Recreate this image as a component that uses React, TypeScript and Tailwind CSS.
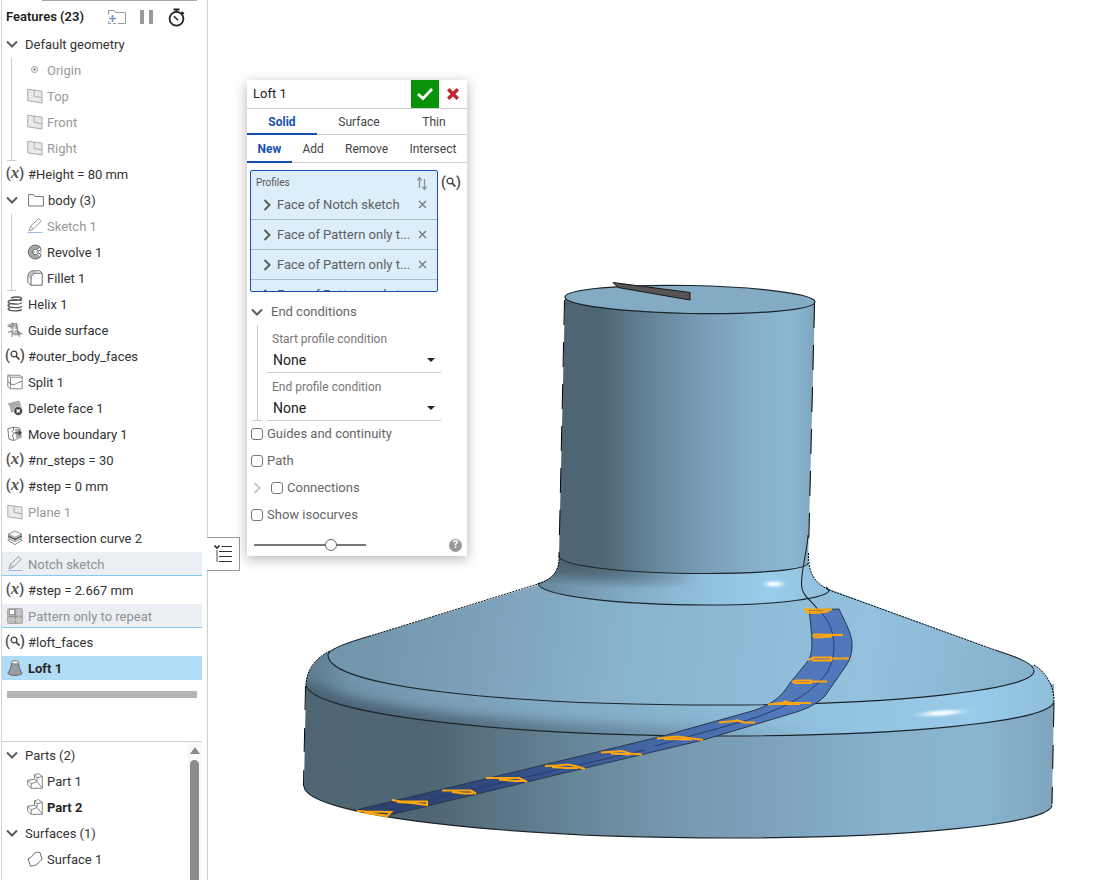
import { useState, type ReactNode } from "react";

type IconName =
  | "origin" | "plane" | "variable" | "sketch" | "revolve" | "fillet" | "helix" | "guide"
  | "query" | "split" | "deleteFace" | "moveBoundary" | "intersection" | "pattern" | "loft"
  | "part" | "surface";

type Feature = {
  label: string;
  icon: IconName;
  state?: "muted" | "related" | "selected" | "bold";
};

const GEOMETRY: Feature[] = [
  { label: "Origin", icon: "origin", state: "muted" },
  { label: "Top", icon: "plane", state: "muted" },
  { label: "Front", icon: "plane", state: "muted" },
  { label: "Right", icon: "plane", state: "muted" },
];

const BODY: Feature[] = [
  { label: "Sketch 1", icon: "sketch", state: "muted" },
  { label: "Revolve 1", icon: "revolve" },
  { label: "Fillet 1", icon: "fillet" },
];

const FEATURES: Feature[] = [
  { label: "Helix 1", icon: "helix" },
  { label: "Guide surface", icon: "guide" },
  { label: "#outer_body_faces", icon: "query" },
  { label: "Split 1", icon: "split" },
  { label: "Delete face 1", icon: "deleteFace" },
  { label: "Move boundary 1", icon: "moveBoundary" },
  { label: "#nr_steps = 30", icon: "variable" },
  { label: "#step = 0 mm", icon: "variable" },
  { label: "Plane 1", icon: "plane", state: "muted" },
  { label: "Intersection curve 2", icon: "intersection" },
  { label: "Notch sketch", icon: "sketch", state: "related" },
  { label: "#step = 2.667 mm", icon: "variable" },
  { label: "Pattern only to repeat", icon: "pattern", state: "related" },
  { label: "#loft_faces", icon: "query" },
  { label: "Loft 1", icon: "loft", state: "selected" },
];

const PROFILES = [
  "Face of Notch sketch",
  "Face of Pattern only t...",
  "Face of Pattern only t...",
  "Face of Pattern only t...",
];

function Svg({ children, className = "size-4" }: { children: ReactNode; className?: string }) {
  return (
    <svg viewBox="0 0 16 16" className={`shrink-0 ${className}`} fill="none" stroke="#6b6b6b" strokeWidth="1" aria-hidden="true">
      {children}
    </svg>
  );
}

function Chevron({ open = true, pale = false }: { open?: boolean; pale?: boolean }) {
  return (
    <svg viewBox="0 0 12 12" className="size-3 shrink-0" fill="none" stroke={pale ? "#c9c9c9" : "#5c5c5c"} strokeWidth="2" aria-hidden="true">
      {open ? <path d="M1 3.5 6 8.5 11 3.5" /> : <path d="M3.5 1 8.5 6 3.5 11" />}
    </svg>
  );
}

function Query({ className = "" }: { className?: string }) {
  return (
    <span className={`flex shrink-0 items-center justify-center text-[14px] leading-4 font-medium text-[#444] ${className}`} aria-hidden="true">
      <span>(</span>
      <svg viewBox="0 0 10 12" className="h-3 w-2.5" fill="none" stroke="#444">
        <circle cx="4" cy="5" r="2.9" strokeWidth="1.3" />
        <path d="M6.2 7.2 9.4 10.6" strokeWidth="1.7" />
      </svg>
      <span>)</span>
    </span>
  );
}

function FeatureIcon({ name }: { name: IconName }) {
  switch (name) {
    case "origin":
      return (
        <Svg>
          <circle cx="7.5" cy="7.5" r="3" stroke="#999" />
          <circle cx="7.5" cy="7.5" r="1.2" fill="#888" stroke="none" />
        </Svg>
      );
    case "plane":
      return (
        <Svg>
          <path d="M.8 1.2 15 3.2V15L.8 12.8Z" fill="#e9e9e9" stroke="#aaa" />
          <path d="M7.2 2.2V8.5L15 9.7" stroke="#aaa" />
        </Svg>
      );
    case "variable":
      return (
        <span className="-mx-1 flex w-6 shrink-0 items-center justify-center pb-0.5 text-[14px] leading-4 font-bold text-[#555]" aria-hidden="true">
          (<i className="font-['Liberation_Serif',serif] text-[17px] leading-4 font-bold">x</i>)
        </span>
      );
    case "sketch":
      return (
        <Svg>
          <path d="M2 12.8 3.6 8.2 11.4.8 14.2 3.2 6.4 11Z" stroke="#999" />
          <path d="M3.6 8.2 6.4 11" stroke="#999" />
          <path d="M.5 14.5H15.5" stroke="#9dbbe4" />
        </Svg>
      );
    case "revolve":
      return (
        <Svg>
          <path d="M13.5 3.4A7 7 0 1 0 13.2 13L9.8 10.2A2.8 2.8 0 1 1 10 5.7Z" fill="#a7a7a7" />
          <path d="M13.5 3.4 14 6 10.8 7.2 10 5.7M13.2 13 14 10.4 11 9.5 9.8 10.2" fill="#fff" />
          <path d="M5 8H14.8" strokeWidth=".8" strokeDasharray="3 1" />
        </Svg>
      );
    case "fillet":
      return (
        <Svg>
          <path d="M.8 7C.8 3.2 3 .8 6.800.8L9.5 3.2C6 3.2 4 5.2 4 9Z" fill="#c4c4c4" stroke="none" />
          <path d="M4 15.2H15.2V3.2H9.5C6 3.2 4 5.2 4 9ZM4 15.2.8 12.3V7C.8 3.2 3 .8 6.8.8H12.8L15.2 3.2" />
        </Svg>
      );
    case "helix":
      return (
        <Svg>
          <path d="M4 1.8C8 .4 14 .8 14.5 2.4S9 4.8 5 4M14.4 5C14 3.8 8 3.4 4 4.2-.3 5.2.7 7.4 5 7.800S14.5 8 14.7 6.5M3 8.2C-.2 9 .8 11 5 11.4S14.5 11.6 14.7 10.2M3 11.8C0 12.8 1 14.2 5 14.6S13 15 14.7 13.6" stroke="#555" strokeWidth="1.4" />
        </Svg>
      );
    case "guide":
      return (
        <Svg>
          <path d="M1.5 2.8 6 1.4C9 1 10 3.2 9.8 5.4L10.5 9 13.5 12.4 8 13 4.6 11 5.3 7Z" fill="#b5b5b5" stroke="#999" />
          <path d="M.5 4 5.5 5M10 9 15.5 12M5 .8 6.200 4M5.500 11 4.6 15M9.5 1 10.500 8 12.5 14.8M1 10.5 5 8.8" stroke="#777" />
          <path d="M7.4 5V10M5.500 7.6H9.8" stroke="#fff" />
        </Svg>
      );
    case "query":
      return <Query className="-mx-1 w-6 pb-0.5" />;
    case "split":
      return (
        <Svg>
          <path d="M.8 1.2 3.5 3.2H15.2V14.8H3.5L.8 12.5ZM3.5 3.2V14.8M.8 1.2H12.8L15.2 3.2" stroke="#888" />
          <path d="M.8 7.5 3.5 9.8C6 11.2 7.8 10.6 9.5 9.4S12.5 8.5 15 7.2" stroke="#777" />
        </Svg>
      );
    case "deleteFace":
      return (
        <Svg>
          <path d="M.5 3.2C4.5 3 8 1 12.5.8L14.8 8 7 11.5 3.5 13C4.2 9 2.8 6 .5 3.2Z" fill="#aaa" stroke="none" />
          <circle cx="11.2" cy="11" r="4.4" fill="#444" stroke="#fff" strokeWidth=".6" />
          <path d="M9.6 9.4 12.8 12.6M12.8 9.4 9.6 12.6" stroke="#fff" strokeWidth="1.4" />
        </Svg>
      );
    case "moveBoundary":
      return (
        <Svg>
          <path d="M8 3 14 2.4 15 11.5 9.5 13.5Z" fill="#aaa" stroke="none" />
          <path d="M.8 2.8 6.5 1.2V4L5 5.5 6.8 7.5 5.2 10 6.5 11.5V14.5L2 13.2Z" stroke="#777" />
          <path d="M6.5 1.2 13 2M6.5 14.5 9.5 13.5" stroke="#888" />
          <path d="M7.5 6.8H14M11.6 4.6 14 6.8 11.6 9" stroke="#444" strokeWidth="1.2" />
        </Svg>
      );
    case "intersection":
      return (
        <Svg>
          <path d="M8 .8 14.5 4 8 7.2 1.5 4ZM1.5 4V8.2L8 11.8 14.5 8.2V4M8 7.2V11.8" fill="#eee" stroke="#999" />
          <path d="M1.5 6 8 9.5 14.5 6" stroke="#555" strokeWidth="1.5" />
          <path d="M3 9.2.8 10.2 8 14.6 15.2 10.2 13 9.2" stroke="#888" />
        </Svg>
      );
    case "pattern":
      return (
        <Svg>
          <rect x=".5" y=".5" width="15" height="15" rx="1" fill="#bdbdbd" stroke="#aaa" />
          <path d="M8.3 1V15M1 8.3H15" stroke="#8c8c8c" />
          <path d="M11.800 1V15M1 11.8H15" stroke="#cecece" />
          <rect x="2.5" y="1.5" width="5" height="5" fill="#fff" stroke="#999" />
        </Svg>
      );
    case "loft":
      return (
        <Svg>
          <path d="M4.5 2.5C4.2 8 2.5 11 .8 13.2 3 16.2 13 16.2 15.2 13.2 13.5 11 11.8 8 11.5 2.5Z" fill="#999da3" stroke="#666" />
          <ellipse cx="8" cy="2.4" rx="3.5" ry="1.7" fill="#f4f4f4" stroke="#777" />
        </Svg>
      );
    case "part":
      return (
        <Svg>
          <path d="M7.500 1.800 11.500.6 15.300 3.400V15.300H4.200L.7 12.200V7.200L7.500 6.300ZM7.500 6.300 10 8.500V4.800L15.300 3.400M10 4.800 7.500 1.800M4.200 15.300V10.800L.7 7.200M4.200 10.800 10 8.500 15.300 15" stroke="#777" strokeWidth=".9" />
        </Svg>
      );
    case "surface":
      return (
        <Svg>
          <path d="M1 7.800C4 7 5.500 5 6 3.400 8 1 11.500.8 13 1.600L15 8.600C12.500 9.600 11.800 11.500 10.500 13 8.500 15.200 6 14 3.500 15.200Z" />
        </Svg>
      );
  }
}

function FeatureRow({ feature, nested = false }: { feature: Feature; nested?: boolean }) {
  const { label, icon, state } = feature;
  let tone = "text-[#333]";
  if (state === "muted") tone = "text-[#999]";
  if (state === "related") tone = "border-b border-[#85c9f2] bg-[#ebeef2] text-[#8d9195]";
  if (state === "selected") tone = "bg-[#b1dcf5] font-bold text-[#262626]";
  if (state === "bold") tone = "font-bold text-[#262626]";
  return (
    <li className={`flex h-6 items-center gap-1 whitespace-nowrap ${nested ? "pl-[15px]" : "pl-[5px]"} ${tone}`}>
      <FeatureIcon name={icon} />
      <span className={`pt-0.5 ${nested ? "" : "pl-px"}`}>{label}</span>
    </li>
  );
}

function Group({ label, folder = false, guide = true, items }: { label: string; folder?: boolean; guide?: boolean; items: Feature[] }) {
  const [open, setOpen] = useState(true);
  return (
    <li className="flex flex-col gap-0.5">
      <button
        type="button"
        aria-expanded={open}
        onClick={() => setOpen(!open)}
        className="flex h-6 items-center gap-[7px] pl-1 text-left text-[#333]"
      >
        <Chevron open={open} />
        {folder && (
          <Svg className="-mr-[3px] ml-[3px] size-4">
            <path d="M.6 2.500H5.500L7 4.500H15.400V14H.6Z" stroke="#777" />
          </Svg>
        )}
        <span className="pt-0.5">{label}</span>
      </button>
      {open && (
        <ul className={`relative ml-[9px] flex flex-col gap-0.5 border-l ${guide ? "border-[#cdcdcd]" : "border-transparent"}`}>
          {items.map((item) => (
            <FeatureRow key={item.label} feature={item} nested />
          ))}
          {guide && <li aria-hidden="true" className="absolute -bottom-px -left-[5px] h-px w-[9px] bg-[#cdcdcd]" />}
        </ul>
      )}
    </li>
  );
}

function FeaturePanel() {
  return (
    <aside className="flex w-52 shrink-0 flex-col border-r border-[#cfcfcf] bg-white pr-[5px]">
      <div className="ml-px flex min-h-0 flex-1 flex-col border-l border-[#d5d5d5]">
        <header className="relative flex h-8 shrink-0 items-center pt-0.5 pl-1">
          <span aria-hidden="true" className="absolute top-0 left-10 h-px w-[155px] bg-[#a8a8a8]" />
          <h2 className="w-[101px] text-[13px] font-semibold text-[#222]">Features (23)</h2>
          <button type="button" aria-label="New folder" className="flex w-[30px]">
            <svg viewBox="0 0 20 16" className="h-4 w-5" fill="none" aria-hidden="true">
              <path d="M1.5 5.500V1.500H7L8.500 3.500H18.500V14.500H11" stroke="#999" />
              <path d="M1.500 12V14.500H4M6 14.500H9" stroke="#999" />
              <path d="M5.500 6V13M2 9.500H9" stroke="#7595d2" strokeWidth="1.6" />
            </svg>
          </button>
          <button type="button" aria-label="Suspend regeneration" className="flex w-[31px] gap-[5px] pl-[3px]">
            <span className="h-3.5 w-1 bg-[#999]" />
            <span className="h-3.5 w-1 bg-[#999]" />
          </button>
          <button type="button" aria-label="Show regeneration times">
            <svg viewBox="0 0 18 19" className="h-[19px] w-[18px]" fill="none" stroke="#262626" aria-hidden="true">
              <circle cx="8.5" cy="10.800" r="6.900" strokeWidth="1.800" />
              <path d="M5.500 1.500H11.500M8.500 1.500V4M13.500 4 15.800 6" strokeWidth="2" />
              <path d="M6 8.200 10 12.300" strokeWidth="1.600" />
            </svg>
          </button>
        </header>

        <ul className="flex flex-col gap-0.5">
          <Group label="Default geometry" items={GEOMETRY} />
          <FeatureRow feature={{ label: "#Height = 80 mm", icon: "variable" }} />
          <Group label="body (3)" folder items={BODY} />
          {FEATURES.map((f) => (
            <FeatureRow key={f.label} feature={f} />
          ))}
        </ul>
        <div className="mt-[11px] mr-[5px] mb-[43px] ml-[5px] h-[7px] shrink-0 bg-[#b5b5b5]" />

        <div className="flex min-h-0 flex-1 overflow-hidden border-t border-[#cfcfcf]">
          <ul className="flex flex-1 flex-col gap-0.5 pt-px">
            <Group
              label="Parts (2)"
              guide={false}
              items={[
                { label: "Part 1", icon: "part" },
                { label: "Part 2", icon: "part", state: "bold" },
              ]}
            />
            <Group label="Surfaces (1)" guide={false} items={[{ label: "Surface 1", icon: "surface" }]} />
          </ul>
          <div aria-hidden="true" className="flex w-[15px] flex-col items-center gap-1.5 bg-[#fafafa] pt-[5px]">
            <svg viewBox="0 0 10 7" className="h-[7px] w-2.5 shrink-0">
              <path d="M5 0 10 7H0Z" fill="#8b8b8b" />
            </svg>
            <span className="w-[9px] flex-1 rounded-t-full bg-[#8b8b8b]" />
          </div>
        </div>
      </div>
    </aside>
  );
}

// Cross sections of the loft, top to bottom
const SECTIONS = [
  "M804 609.5H832M806 612.5 818 613 829 611M805 608 808 612 820 612",
  "M813 637 814 634.5 843 635M814 637.5 831 636.5V634",
  "M808 660 814 657.5H831V660.5H812M831 658.5H849",
  "M792 682 796 680.5H811V683H794M811 681.5H827",
  "M768 704.5 784 702.5 785 701.5 790 703H811M775 704 800 704",
  "M719 722.5 735 721 737 720.5 744 722.5H755",
  "M657 738.5 677 736.5 689 738 703 740M664 739 692 739.5",
  "M601 752.5 622 751 630 753.5 642 754.5M611 753.5 630 754.5",
  "M545 766 557 765.5 568 764.5 577 766.5 585 769M552 767 566 768 578 768",
  "M486 778 519 778 527 782M499 779.5 516 781 524 781",
  "M442 790.5 471 790.5 476 794M452 792 464 793.5 473 793.5",
  "M392 800 401 801.5 427 801.5V805L412 803 397 802",
  "M357 811 366 811.5 391 812 387 816 364 812.5M373 814 387 815.5",
];

function Model() {
  return (
    <svg viewBox="208 0 896 880" className="block h-full w-full" role="img" aria-label="Loft preview on part">
      <defs>
        <linearGradient id="neck" gradientUnits="userSpaceOnUse" x1="560" y1="0" x2="815" y2="0">
          <stop offset="0" stopColor="#4f6573" />
          <stop offset=".17" stopColor="#4f6674" />
          <stop offset=".3" stopColor="#5f7c8e" />
          <stop offset=".5" stopColor="#7397ae" />
          <stop offset=".62" stopColor="#7da2bd" />
          <stop offset=".76" stopColor="#86b0cb" />
          <stop offset=".92" stopColor="#8ab7d2" />
          <stop offset="1" stopColor="#7da4bc" />
        </linearGradient>
        <linearGradient id="base" gradientUnits="userSpaceOnUse" x1="304" y1="0" x2="1054" y2="0">
          <stop offset="0" stopColor="#4f6573" />
          <stop offset=".17" stopColor="#4f6674" />
          <stop offset=".3" stopColor="#5f7c8c" />
          <stop offset=".39" stopColor="#698a9e" />
          <stop offset=".5" stopColor="#7699b1" />
          <stop offset=".62" stopColor="#7da2bd" />
          <stop offset=".76" stopColor="#86b0cb" />
          <stop offset=".9" stopColor="#8ab5d0" />
          <stop offset="1" stopColor="#7fa5be" />
        </linearGradient>
        <linearGradient id="cone" gradientUnits="userSpaceOnUse" x1="380" y1="590" x2="1030" y2="680">
          <stop offset="0" stopColor="#7297ad" />
          <stop offset=".18" stopColor="#7da2bc" />
          <stop offset=".4" stopColor="#89b4cf" />
          <stop offset=".75" stopColor="#93c1de" />
          <stop offset="1" stopColor="#86b1cb" />
        </linearGradient>
        <linearGradient id="rim" gradientUnits="userSpaceOnUse" x1="306" y1="0" x2="1054" y2="0">
          <stop offset="0" stopColor="#5d7b8d" />
          <stop offset=".06" stopColor="#7094aa" />
          <stop offset=".18" stopColor="#7a9fb8" />
          <stop offset=".4" stopColor="#84aec9" />
          <stop offset=".65" stopColor="#91c0dd" />
          <stop offset=".9" stopColor="#98cae9" />
          <stop offset="1" stopColor="#8fbeda" />
        </linearGradient>
        <linearGradient id="fade" gradientUnits="userSpaceOnUse" x1="306" y1="0" x2="820" y2="0">
          <stop offset="0" stopColor="#fff" />
          <stop offset=".25" stopColor="#ddd" />
          <stop offset="1" stopColor="#000" />
        </linearGradient>
        <mask id="rimMask" maskUnits="userSpaceOnUse" x="300" y="640" width="560" height="110">
          <rect x="300" y="640" width="560" height="110" fill="url(#fade)" />
        </mask>
        <clipPath id="rimClip">
          <path d="M328 655C315 658 306 672 306 684 306 713 500 736 720 736H860V705H720C504 705 328 690 328 655Z" />
        </clipPath>
        <filter id="soft" filterUnits="userSpaceOnUse" x="270" y="620" width="620" height="150">
          <feGaussianBlur stdDeviation="6" />
        </filter>
        <linearGradient id="collar" gradientUnits="userSpaceOnUse" x1="538" y1="0" x2="829" y2="0">
          <stop offset="0" stopColor="#66899d" />
          <stop offset=".25" stopColor="#7da5bf" />
          <stop offset=".5" stopColor="#8dbbd7" />
          <stop offset=".8" stopColor="#99cceb" />
          <stop offset="1" stopColor="#91bfdc" />
        </linearGradient>
        <radialGradient id="collarShade" gradientUnits="userSpaceOnUse" cx="0" cy="0" r="1" gradientTransform="translate(562 564) rotate(6) scale(140 21)">
          <stop offset="0" stopColor="#4a606e" />
          <stop offset=".4" stopColor="#4a606e" stopOpacity=".75" />
          <stop offset="1" stopColor="#4a606e" stopOpacity="0" />
        </radialGradient>
        <radialGradient id="glint">
          <stop offset="0" stopColor="#fff" />
          <stop offset=".35" stopColor="#e2f4fd" />
          <stop offset="1" stopColor="#9bceee" stopOpacity="0" />
        </radialGradient>
        <linearGradient id="ribbon" gradientUnits="userSpaceOnUse" x1="360" y1="812" x2="770" y2="705">
          <stop offset="0" stopColor="#2b4068" />
          <stop offset=".3" stopColor="#30497f" />
          <stop offset=".65" stopColor="#41629f" />
          <stop offset="1" stopColor="#5078bb" />
        </linearGradient>
      </defs>

      {/* Base */}
      <path d="M306 684 304 786C304 815 500 838 730 838 905 838 1052 824 1052 805L1054 701V684Z" fill="url(#base)" />

      {/* Rim fillet */}
      <path d="M330 651C315 658 306 672 306 684 306 713 500 736 720 736 900 736 1054 722 1054 701 1054 686 1046 672 1034 665L720 640Z" fill="url(#rim)" />
      <g clipPath="url(#rimClip)" mask="url(#rimMask)">
        <path d="M306 684C306 713 500 736 720 736H860" fill="none" stroke="#486070" strokeWidth="20" filter="url(#soft)" />
      </g>
      <ellipse cx="942" cy="713" rx="34" ry="5" transform="rotate(-4 942 713)" fill="url(#glint)" />

      {/* Cone */}
      <path d="M538 585 370 636C342 644 328 650 328 655 328 687 504 705 720 705 893 705 1034 690 1034 671 1034 664 1020 658 995 650L829 589Z" fill="url(#cone)" />

      {/* Collar fillet */}
      <path d="M559 556C560 573 550 580 538 583 538 596 620 605 708 605 780 605 829 598 829 590 815 583 808 574 808 553Z" fill="url(#collar)" />
      <path d="M559 556C560 573 550 580 538 583 538 596 620 605 708 605V565Z" fill="url(#collarShade)" />
      <ellipse cx="774" cy="584" rx="15" ry="5" fill="url(#glint)" />

      {/* Neck */}
      <path d="M565 297 559 556C559 566 625 573.5 705 573.5 760 573.5 808 570 808 563L815 302Z" fill="url(#neck)" />
      <ellipse cx="690" cy="299.5" rx="125" ry="14" transform="rotate(1.1 690 299.5)" fill="#83abc4" stroke="#1c2429" strokeWidth="1.2" />
      <path d="M613 282.5 690 292.5V300L618 287.5Z" fill="#555" stroke="#161616" strokeWidth="1" />

      {/* Edges */}
      <g fill="none" stroke="#1c2429" strokeWidth="1.1">
        <path d="M559 556C559 566 625 573.5 705 573.5 760 573.5 808 570 808 563" />
        <path d="M538 583C538 596 620 605 708 605 780 605 829 598 829 590L826 587" />
        <path d="M370 636C342 644 328 650 328 655 328 687 504 705 720 705 893 705 1034 690 1034 671 1034 664 1020 658 995 650" />
        <path d="M306 684C306 713 500 736 720 736 900 736 1054 722 1054 701" />
        <path d="M304 786C304 815 500 838 730 838 905 838 1052 824 1052 805" />
        <path d="M808 535C807 553 801 570 801.5 585 802 597 813 601 818 610" />
      </g>

      {/* Silhouette */}
      <g fill="none" stroke="#000" strokeWidth="1">
        <path d="M564.5 300 559 556M814.5 303 808.5 553" strokeDasharray="25 17" />
        <path d="M305.5 686 303.5 786M1054 703 1052 804" strokeDasharray="24 18" />
        <path d="M559 556C560 573 550 580 538 584L370 636M330 651C315 658 307 670 306 684" strokeDasharray="2 1" />
        <path d="M808.5 553C808 574 815 583 829 590L995 650M1034 665C1046 672 1054 686 1054 701" strokeDasharray="2 1" />
      </g>

      {/* Loft preview */}
      <path
        d="M358 809.5 560 761 663 736 720 720 752 711C775 704 783 694 790 683L808 661C813 652 813 642 809 610L839 609C847 626 853 636 852 647 852 657 847 665 843 670L825 696C816 705 804 710 790 714L703 740 560 774 390 815Z"
        fill="url(#ribbon)"
        stroke="#29384d"
        strokeWidth="1"
      />
      <path d="M390 809 530 776 645 750M655 746 748 720C791 706 812 692 826 674 839 655 836 624 818 610" fill="none" stroke="#253d72" strokeWidth="1" />
      <g fill="none" stroke="#fea60c" strokeWidth="2.2">
        {SECTIONS.map((d) => (
          <path key={d} d={d} />
        ))}
      </g>
    </svg>
  );
}

function Tabs({ items, tall = false }: { items: string[]; tall?: boolean }) {
  const [active, setActive] = useState(items[0]);
  return (
    <div role="tablist" className={`flex border-b border-[#cfcfcf] ${tall ? "h-7" : "h-[26px]"}`}>
      {items.map((item) => (
        <button
          key={item}
          type="button"
          role="tab"
          aria-selected={item === active}
          onClick={() => setActive(item)}
          className={`-mb-px flex-auto border-b-2 pt-0.5 text-[12px] ${
            item === active ? "border-[#1651b0] font-bold text-[#1651b0]" : "border-transparent text-[#444]"
          }`}
        >
          {item}
        </button>
      ))}
    </div>
  );
}

function ConditionSelect({ id, label }: { id: string; label: string }) {
  return (
    <div className="flex h-12 flex-col border-b border-[#cfcfcf]">
      <label htmlFor={id} className="pt-1 pl-[5px] text-[12px] leading-5 text-[#777]">
        {label}
      </label>
      <div className="relative">
        <select id={id} className="h-[22px] w-full appearance-none bg-transparent pl-1.5 text-[14px] leading-5 text-[#222] outline-none">
          <option>None</option>
          <option>Normal to profile</option>
          <option>Tangent to profile</option>
        </select>
        <svg viewBox="0 0 8 4" className="pointer-events-none absolute top-[9px] right-1.5 h-1 w-2" aria-hidden="true">
          <path d="M0 0H8L4 4Z" fill="#222" />
        </svg>
      </div>
    </div>
  );
}

function Check({ label }: { label: string }) {
  return (
    <label className="flex items-center gap-1 text-[13px] leading-5 text-[#666]">
      <input type="checkbox" className="size-3 appearance-none rounded-[3px] border border-[#777] bg-white checked:bg-[#1651b0]" />
      {label}
    </label>
  );
}

function LoftDialog() {
  return (
    <form
      onSubmit={(e) => e.preventDefault()}
      className="absolute top-20 left-[39px] w-[220px] bg-white pb-[3px] shadow-[0_3px_12px_rgba(0,0,0,0.3)]"
    >
      <div className="flex h-[29px] border-b border-[#cfcfcf]">
        <input aria-label="Feature name" defaultValue="Loft 1" className="min-w-0 flex-1 pl-1.5 text-[13px] text-[#222] outline-none" />
        <button type="submit" aria-label="Accept" className="flex size-7 items-center justify-center bg-[#0a930a]">
          <svg viewBox="0 0 16 14" className="h-3.5 w-4" fill="none" stroke="#fff" strokeWidth="2.8" aria-hidden="true">
            <path d="M1 7 6 11.5 15 2" />
          </svg>
        </button>
        <button type="button" aria-label="Cancel" className="flex size-7 items-center justify-center">
          <svg viewBox="0 0 12 12" className="size-3" fill="none" stroke="#c1272d" strokeWidth="3.4" aria-hidden="true">
            <path d="M1.2 1.2 10.8 10.8M10.8 1.2 1.2 10.8" />
          </svg>
        </button>
      </div>
      <Tabs items={["Solid", "Surface", "Thin"]} />
      <Tabs items={["New", "Add", "Remove", "Intersect"]} tall />

      <div className="flex items-start gap-0.5 pt-[7px] pl-[3px]">
        <div className="h-[122px] w-[188px] shrink-0 overflow-hidden rounded-xs border border-[#1651b0] bg-[#dceef9]">
          <div className="flex h-[19px] items-center justify-between pt-1 pr-[9px] pl-[5px] text-[10px] text-[#555]">
            Profiles
            <svg viewBox="0 0 12 14" className="h-3.5 w-3" fill="none" stroke="#7d8a92" aria-hidden="true">
              <path d="M3.5 12V2M1.2 4.5 3.5 1.5 5.8 4.5M8.5 3V13M6.2 10.5 8.5 13.5 10.8 10.5" strokeWidth="1.2" />
            </svg>
          </div>
          <ul>
            {PROFILES.map((p, i) => (
              <li key={i} className="flex h-[30px] items-center border-b border-[#a9bfcd] px-2.5 text-[13px] text-[#5c6062]">
                <Chevron open={false} />
                <span className="ml-1 w-[137px] shrink-0 pt-px whitespace-nowrap">{p}</span>
                <button type="button" aria-label={`Remove ${p}`} className="ml-1">
                  <svg viewBox="0 0 9 9" className="size-[9px]" fill="none" stroke="#6f787d" strokeWidth="1.3" aria-hidden="true">
                    <path d="M1 1 8 8M8 1 1 8" />
                  </svg>
                </button>
              </li>
            ))}
          </ul>
        </div>
        <button type="button" aria-label="Add query variable" className="mt-1">
          <Query className="w-[22px]" />
        </button>
      </div>

      <button type="button" className="mt-2.5 flex h-5 items-center gap-2 pl-1 text-[13px] text-[#666]">
        <Chevron />
        End conditions
      </button>
      <div className="relative mt-[3px] mr-[26px] ml-2.5 border-l border-[#cdcdcd] pl-[9px]">
        <ConditionSelect id="start-condition" label="Start profile condition" />
        <ConditionSelect id="end-condition" label="End profile condition" />
        <span aria-hidden="true" className="absolute bottom-0 -left-[6px] h-px w-2.5 bg-[#cdcdcd]" />
      </div>

      <div className="mt-[3px] flex flex-col gap-[7px] pl-1">
        <Check label="Guides and continuity" />
        <Check label="Path" />
        <div className="flex items-center gap-2">
          <Chevron open={false} pale />
          <Check label="Connections" />
        </div>
        <Check label="Show isocurves" />
      </div>

      <div className="mt-3 flex h-4 items-center justify-between pr-[5px] pl-[7px]">
        <input
          type="range"
          aria-label="Isocurve density"
          min={0}
          max={100}
          defaultValue={71}
          className="h-0.5 w-28 appearance-none bg-[#777] [&::-webkit-slider-thumb]:size-3 [&::-webkit-slider-thumb]:appearance-none [&::-webkit-slider-thumb]:rounded-full [&::-webkit-slider-thumb]:border [&::-webkit-slider-thumb]:border-[#666] [&::-webkit-slider-thumb]:bg-white"
        />
        <button type="button" aria-label="Help" className="flex size-[13px] items-center justify-center rounded-full bg-[#999] text-[11px] font-bold text-white">
          ?
        </button>
      </div>
    </form>
  );
}

export default function App() {
  return (
    <div className="flex h-screen overflow-hidden bg-white font-[Roboto,sans-serif] text-[13px]">
      <FeaturePanel />
      <main className="relative min-w-0 flex-1">
        <Model />
        <button
          type="button"
          aria-label="Toggle feature list"
          className="absolute top-[537px] -left-px flex h-[34px] w-[33px] items-center justify-center border border-l-0 border-[#999] bg-white"
        >
          <svg viewBox="0 0 18 18" className="size-[18px]" fill="none" stroke="#333" aria-hidden="true">
            <path d="M7.5 1.5H18M5 6.5H18M5 11.5H18M5 16.5H18" />
            <path d="M.5.5 3 3 5.5.5" strokeWidth="1.6" />
            <path d="M3 5V17" stroke="#888" strokeWidth="1.5" />
          </svg>
        </button>
        <LoftDialog />
      </main>
    </div>
  );
}
